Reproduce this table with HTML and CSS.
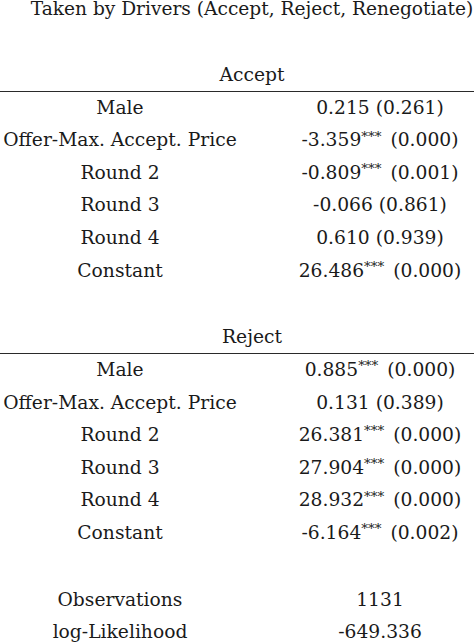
FILE: index.html
```html
<!DOCTYPE html>
<html>
<head>
<meta charset="utf-8">
<link rel="stylesheet" href="styles.css">
</head>
<body>
<div class="page">
  <div class="title">Taken by Drivers (Accept, Reject, Renegotiate)</div>

  <div class="panel panel-first">
    <div class="panel-head">Accept</div>
    <div class="grid">
      <div class="lab">Male</div><div class="val">0.215 (0.261)</div>
      <div class="lab">Offer-Max. Accept. Price</div><div class="val">-3.359<sup>***</sup> (0.000)</div>
      <div class="lab">Round 2</div><div class="val">-0.809<sup>***</sup> (0.001)</div>
      <div class="lab">Round 3</div><div class="val">-0.066 (0.861)</div>
      <div class="lab">Round 4</div><div class="val">0.610 (0.939)</div>
      <div class="lab">Constant</div><div class="val">26.486<sup>***</sup> (0.000)</div>
    </div>
  </div>

  <div class="panel">
    <div class="panel-head">Reject</div>
    <div class="grid">
      <div class="lab">Male</div><div class="val">0.885<sup>***</sup> (0.000)</div>
      <div class="lab">Offer-Max. Accept. Price</div><div class="val">0.131 (0.389)</div>
      <div class="lab">Round 2</div><div class="val">26.381<sup>***</sup> (0.000)</div>
      <div class="lab">Round 3</div><div class="val">27.904<sup>***</sup> (0.000)</div>
      <div class="lab">Round 4</div><div class="val">28.932<sup>***</sup> (0.000)</div>
      <div class="lab">Constant</div><div class="val">-6.164<sup>***</sup> (0.002)</div>
    </div>
  </div>

  <div class="grid stats">
    <div class="lab">Observations</div><div class="val">1131</div>
    <div class="lab">log-Likelihood</div><div class="val">-649.336</div>
  </div>
</div>
</body>
</html>
```

FILE: styles.css
```css
html, body {
  margin: 0;
  padding: 0;
  background: #ffffff;
  overflow: hidden;
}

.page {
  width: 474px;
  padding-top: 1px;
  font-family: "DejaVu Serif", serif;
  font-size: 18.7px;
  color: #1a1a1a;
}

.title {
  height: 15px;
  line-height: 16px;
  font-size: 18.6px;
  padding-left: 30px;
  text-align: center;
  white-space: nowrap;
  margin-bottom: 42.7px;
}

.panel {
  margin-top: 33.7px;
}

.panel-first {
  margin-top: 0;
}

.panel-head {
  height: 32px;
  line-height: 32px;
  padding-left: 30px;
  text-align: center;
  border-bottom: 1.5px solid #2a2a2a;
}

.grid {
  display: grid;
  grid-template-columns: 240px 234px;
  grid-auto-rows: 32.6px;
  align-items: center;
}

.lab,
.val {
  line-height: 32.6px;
  text-align: center;
  white-space: nowrap;
}

.val {
  padding-left: 46px;
}

.stats {
  margin-top: 34.1px;
}

sup {
  font-size: 0.72em;
  line-height: 0;
  vertical-align: 0.42em;
  margin-right: 3px;
}
```
